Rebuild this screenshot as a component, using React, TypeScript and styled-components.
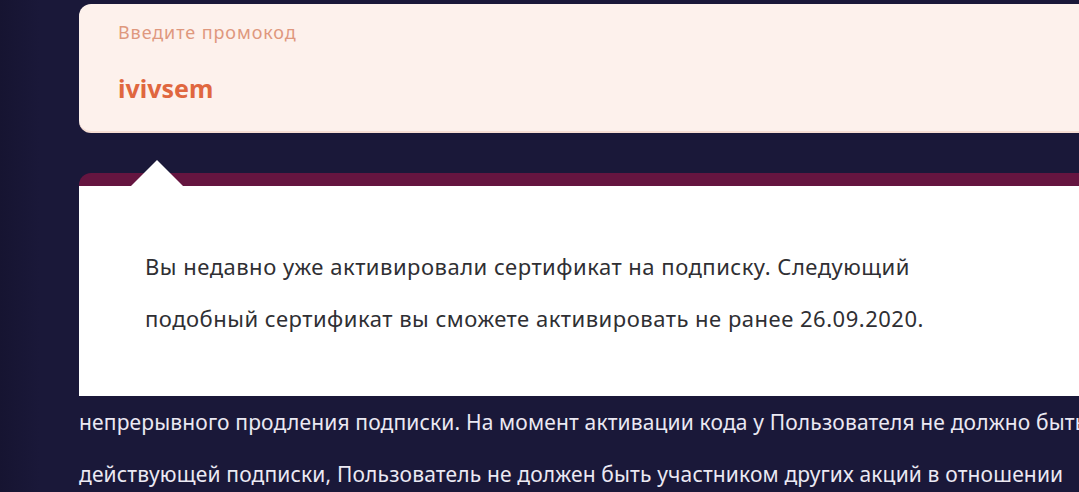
import React from "react";
import styled, { createGlobalStyle } from "styled-components";

const Global = createGlobalStyle`
  html, body { margin: 0; padding: 0; background: #19173a; overflow: hidden; }
  body { font-family: "Noto Sans", "Open Sans", sans-serif; }
`;

const Page = styled.div`
  width: 1079px;
  height: 492px;
  overflow: hidden;
  background: linear-gradient(90deg, #161431 0px, #1a1839 40px, #1a1839 100%);
  padding: 4px 0 0 79px;
  box-sizing: border-box;
  display: flex;
  flex-direction: column;
`;

const InputCard = styled.div`
  flex-shrink: 0;
  width: 1100px;
  height: 129px;
  box-sizing: border-box;
  background: #fdf1ec;
  border-radius: 12px 0 0 12px;
  border-bottom: 2px solid #f6ddd3;
  padding: 16px 0 0 39px;
  display: flex;
  flex-direction: column;
`;

const Label = styled.div`
  font-size: 18px;
  line-height: 24px;
  letter-spacing: 0.9px;
  color: #df987e;
`;

const Value = styled.div`
  margin-top: 28px;
  font-size: 25px;
  line-height: 32px;
  font-weight: 700;
  color: #e0673f;
`;

const Tooltip = styled.div`
  flex-shrink: 0;
  position: relative;
  margin-top: 40px;
  width: 1100px;
  background: #651540;
  border-radius: 12px 0 0 0;
  padding-top: 13px;
  &::before {
    content: "";
    position: absolute;
    left: 52px;
    top: -13px;
    border-left: 26px solid transparent;
    border-right: 26px solid transparent;
    border-bottom: 26px solid #ffffff;
  }
`;

const TooltipBody = styled.div`
  background: #ffffff;
  padding: 54px 0 52px 66px;
  font-size: 22px;
  line-height: 52px;
  letter-spacing: 0.5px;
  color: #2f2f33;
`;

const Terms = styled.div`
  flex-shrink: 0;
  font-size: 21px;
  line-height: 52px;
  letter-spacing: 0.15px;
  color: #ebe9f3;
  white-space: nowrap;
`;

export default function App() {
  return (
    <>
      <Global />
      <Page>
        <InputCard>
          <Label>Введите промокод</Label>
          <Value>ivivsem</Value>
        </InputCard>
        <Tooltip>
          <TooltipBody>
            Вы недавно уже активировали сертификат на подписку. Следующий
            <br />
            подобный сертификат вы сможете активировать не ранее 26.09.2020.
          </TooltipBody>
        </Tooltip>
        <Terms>
          непрерывного продления подписки. На момент активации кода у Пользователя не должно быть
          <br />
          действующей подписки, Пользователь не должен быть участником других акций в отношении
        </Terms>
      </Page>
    </>
  );
}
